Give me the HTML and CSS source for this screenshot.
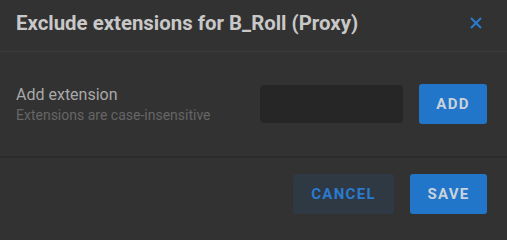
FILE: index.html
```html
<!DOCTYPE html>
<html>
<head>
<meta charset="utf-8">
<link rel="stylesheet" href="styles.css">
</head>
<body>
<div class="dialog">
  <div class="header">
    <h1 class="title">Exclude extensions for B_Roll (Proxy)</h1>
    <button class="close" aria-label="Close">
      <svg width="12" height="12" viewBox="0 0 12 12"><path d="M1 1 L11 11 M11 1 L1 11" stroke="#2a7bd0" stroke-width="2" fill="none"/></svg>
    </button>
  </div>
  <div class="body">
    <div class="labels">
      <div class="label">Add extension</div>
      <div class="hint">Extensions are case-insensitive</div>
    </div>
    <input class="ext-input" type="text">
    <button class="btn btn-primary btn-add">ADD</button>
  </div>
  <div class="footer">
    <button class="btn btn-secondary btn-cancel">CANCEL</button>
    <button class="btn btn-primary btn-save">SAVE</button>
  </div>
</div>
</body>
</html>
```
FILE: styles.css
```css
html, body {
  margin: 0;
  padding: 0;
  background: #323232;
  font-family: Roboto, "Liberation Sans", sans-serif;
}
.dialog {
  width: 507px;
  height: 225px;
  display: flex;
  flex-direction: column;
}
.header {
  height: 46px;
  border-bottom: 1px solid #3c3c3c;
  display: flex;
  align-items: center;
  justify-content: space-between;
  padding: 0 25px 5px 16px;
  box-sizing: content-box;
}
.title {
  margin: 0;
  font-size: 20.4px;
  font-weight: 700;
  color: #c8c8c8;
  line-height: 24px;
}
.close {
  background: none;
  border: 0;
  padding: 0;
  width: 12px;
  height: 12px;
  display: flex;
}
.body {
  height: 104px;
  display: flex;
  align-items: center;
  padding: 0 20px 0 16px;
  gap: 16px;
  border-bottom: 2px solid #2b2b2b;
}
.labels {
  flex: 1;
  display: flex;
  flex-direction: column;
  gap: 3px;
  margin-top: -1px;
}
.label {
  font-size: 16px;
  color: #a9a9a9;
}
.hint {
  font-size: 14px;
  color: #666666;
}
.ext-input {
  width: 143px;
  height: 38px;
  box-sizing: border-box;
  border: 0;
  border-radius: 4px;
  background: #262626;
  outline: none;
}
.btn {
  height: 40px;
  border: 0;
  border-radius: 3px;
  font-family: Roboto, "Liberation Sans", sans-serif;
  font-size: 15px;
  font-weight: 700;
  letter-spacing: 1.3px;
  padding: 0;
}
.btn-primary {
  background: #2176c9;
  color: #c9d2dc;
}
.btn-add {
  width: 68px;
}
.btn-secondary {
  background: #2e3944;
  color: #2a7bd0;
}
.btn-cancel {
  width: 101px;
}
.btn-save {
  width: 77px;
}
.footer {
  flex: 1;
  display: flex;
  justify-content: flex-end;
  align-items: flex-start;
  padding: 16px 20px 0 0;
  gap: 16px;
}
```
